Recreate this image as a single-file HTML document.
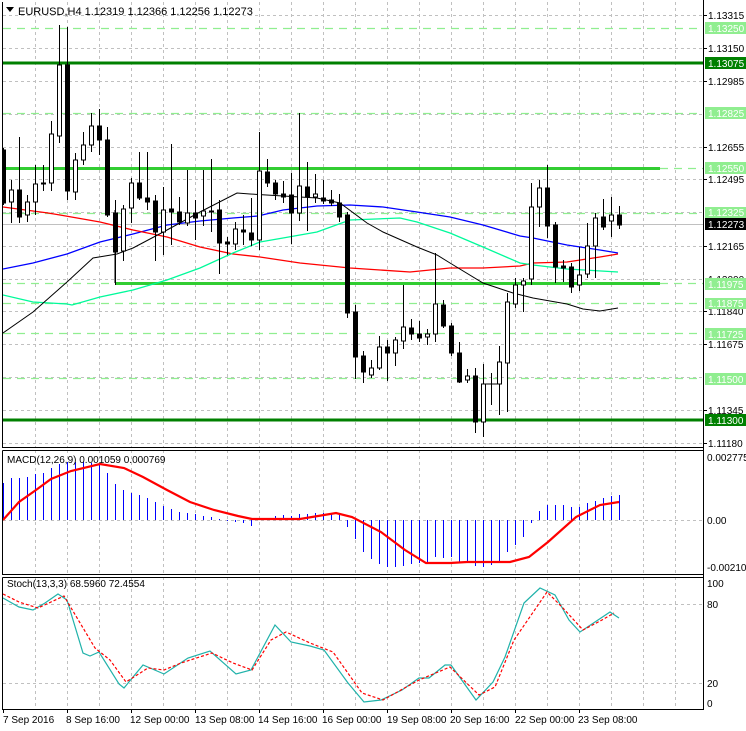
<!DOCTYPE html>
<html><head><meta charset="utf-8"><style>
html,body{margin:0;padding:0;background:#fff;}
svg{display:block;font-family:"Liberation Sans",sans-serif;}
.w{fill:#fff;stroke:#000;stroke-width:1}
.b{fill:#000;stroke:#000;stroke-width:1}
.t{font-size:10px;fill:#000}
.lb{font-size:10px;fill:#fff}
</style></head><body>
<svg width="746" height="731" viewBox="0 0 746 731" xmlns="http://www.w3.org/2000/svg">
<defs>
<clipPath id="cm"><rect x="3" y="2" width="700" height="445"/></clipPath>
</defs>
<g stroke="#c0c0c0" stroke-width="1" stroke-dasharray="3,3" fill="none">
<path d="M35.5 2V447M67.5 2V447M99.5 2V447M131.5 2V447M163.5 2V447M195.5 2V447M227.5 2V447M259.5 2V447M291.5 2V447M323.5 2V447M355.5 2V447M387.5 2V447M419.5 2V447M451.5 2V447M483.5 2V447M515.5 2V447M547.5 2V447M579.5 2V447M611.5 2V447M643.5 2V447M675.5 2V447"/>
<path d="M35.5 450V574M67.5 450V574M99.5 450V574M131.5 450V574M163.5 450V574M195.5 450V574M227.5 450V574M259.5 450V574M291.5 450V574M323.5 450V574M355.5 450V574M387.5 450V574M419.5 450V574M451.5 450V574M483.5 450V574M515.5 450V574M547.5 450V574M579.5 450V574M611.5 450V574M643.5 450V574M675.5 450V574"/>
<path d="M35.5 577V709M67.5 577V709M99.5 577V709M131.5 577V709M163.5 577V709M195.5 577V709M227.5 577V709M259.5 577V709M291.5 577V709M323.5 577V709M355.5 577V709M387.5 577V709M419.5 577V709M451.5 577V709M483.5 577V709M515.5 577V709M547.5 577V709M579.5 577V709M611.5 577V709M643.5 577V709M675.5 577V709"/>
<path d="M3 15.5H703M3 48.5H703M3 81.5H703M3 114.5H703M3 147.5H703M3 179.5H703M3 212.5H703M3 246.5H703M3 279.5H703M3 311.5H703M3 344.5H703M3 377.5H703M3 410.5H703M3 443.5H703"/>
<path d="M3 520.5H703M3 604.5H703M3 683.5H703"/>
</g>
<g clip-path="url(#cm)">
<g stroke="#90ee90" stroke-width="1.2" stroke-dasharray="8,6" fill="none">
<path d="M3 28.5H703M3 113.5H703M660 168.5H703M3 213.5H703M660 283.5H703M3 303.5H703M3 333.5H703M3 378.5H703M3 283.5H115"/>
</g>
<path d="M3 224.5H703" stroke="#c0c0c0" stroke-width="1"/>
<path d="M3 63H703M3 420H703" stroke="#008000" stroke-width="3"/>
<path d="M3 168.5H660M115 283.5H660" stroke="#32cd32" stroke-width="3"/>
<path d="M115 283V210" stroke="#000" stroke-width="1"/>
<polyline fill="none" stroke="#0000ff" stroke-width="1.3" points="3,269 33,263 67,254 100,242 133,234 167,225 200,221 233,218 258,216 283,210 317,206 350,205 383,207 417,212 450,217 483,225 520,236 533,238 567,245 600,250 618,253"/>
<polyline fill="none" stroke="#ff0000" stroke-width="1.3" points="3,207 48,213 60,215 100,222 133,230 167,237 200,247 233,254 260,257 300,263 350,268 410,272 450,268 483,268 520,266 533,263 567,262 600,257 618,254"/>
<polyline fill="none" stroke="#00fa9a" stroke-width="1.3" points="3,295 33,302 67,304 72,305 100,297 133,290 167,280 200,268 233,253 260,242 283,238 317,232 350,220 400,218 417,222 450,233 483,247 520,263 533,265 567,269 618,272"/>
<polyline fill="none" stroke="#000" stroke-width="1" points="3,333 33,312 67,282 93,258 117,254 133,248 167,230 200,212 237,193 250,194 283,196 317,198 340,203 367,223 383,232 417,247 437,255 450,263 483,283 513,293 533,298 567,304 583,309 600,311 618,308"/>
<path stroke="#000" stroke-width="1" fill="none" d="M3.5 148V205M11.5 180V223M19.5 137V223M27.5 195V222M35.5 165V215M43.5 165V191M51.5 121V191M59.5 25V143M67.5 27V200M75.5 153V200M83.5 132V165M91.5 113V152M99.5 109V155M107.5 127V217M115.5 200V285M123.5 205V261M131.5 178V223M139.5 152V200M147.5 152V210M155.5 195V261M163.5 187V255M171.5 144V245M179.5 197V225M187.5 170V226M195.5 200V240M203.5 170V226M211.5 159V232M219.5 200V274M227.5 237V255M235.5 222V250M243.5 215V245M251.5 198V246M259.5 132V250M267.5 159V187M275.5 180V200M283.5 181V203M291.5 173V244M299.5 113V221M307.5 162V231M315.5 174V203M323.5 180V204M331.5 190V206M339.5 194V222M347.5 212V318M355.5 305V379M363.5 351V383M371.5 360V378M379.5 336V370M387.5 340V381M395.5 337V366M403.5 285V349M411.5 319V340M419.5 321V342M427.5 329V345M435.5 253V342M443.5 300V328M451.5 323V356M459.5 342V383M467.5 369V383M475.5 368V433M483.5 364V437M491.5 373V405M499.5 346V415M507.5 293V412M515.5 278V308M523.5 278V312M531.5 183V285M539.5 180V227M547.5 165V238M555.5 222V283M563.5 260V282M571.5 263V293M579.5 247V291M587.5 223V278M595.5 213V278M603.5 199V230M611.5 197V237M619.5 206V229M483.5 384H499.5"/>
<rect class="b" x="1.5" y="150" width="4" height="53"/>
<rect class="w" x="9.5" y="190" width="4" height="12"/>
<rect class="b" x="17.5" y="190" width="4" height="27"/>
<rect class="w" x="25.5" y="202" width="4" height="13"/>
<rect class="w" x="33.5" y="184" width="4" height="18"/>
<rect class="b" x="41.5" y="183" width="4" height="1"/>
<rect class="w" x="49.5" y="134" width="4" height="49"/>
<rect class="w" x="57.5" y="65" width="4" height="71"/>
<rect class="b" x="65.5" y="65" width="4" height="126"/>
<rect class="w" x="73.5" y="160" width="4" height="32"/>
<rect class="w" x="81.5" y="145" width="4" height="15"/>
<rect class="w" x="89.5" y="126" width="4" height="19"/>
<rect class="b" x="97.5" y="126" width="4" height="14"/>
<rect class="b" x="105.5" y="140" width="4" height="75"/>
<rect class="b" x="113.5" y="213" width="4" height="39"/>
<rect class="w" x="121.5" y="209" width="4" height="42"/>
<rect class="w" x="129.5" y="183" width="4" height="25"/>
<rect class="b" x="137.5" y="183" width="4" height="15"/>
<rect class="b" x="145.5" y="198" width="4" height="4"/>
<rect class="b" x="153.5" y="201" width="4" height="31"/>
<rect class="w" x="161.5" y="210" width="4" height="22"/>
<rect class="b" x="169.5" y="209" width="4" height="3"/>
<rect class="b" x="177.5" y="212" width="4" height="10"/>
<rect class="w" x="185.5" y="213" width="4" height="10"/>
<rect class="b" x="193.5" y="213" width="4" height="5"/>
<rect class="w" x="201.5" y="211" width="4" height="5"/>
<rect class="b" x="209.5" y="211" width="4" height="1"/>
<rect class="b" x="217.5" y="210" width="4" height="33"/>
<rect class="b" x="225.5" y="242" width="4" height="2"/>
<rect class="w" x="233.5" y="229" width="4" height="15"/>
<rect class="b" x="241.5" y="230" width="4" height="2"/>
<rect class="b" x="249.5" y="233" width="4" height="7"/>
<rect class="w" x="257.5" y="171" width="4" height="69"/>
<rect class="b" x="265.5" y="172" width="4" height="11"/>
<rect class="b" x="273.5" y="183" width="4" height="11"/>
<rect class="b" x="281.5" y="194" width="4" height="3"/>
<rect class="b" x="289.5" y="195" width="4" height="18"/>
<rect class="w" x="297.5" y="186" width="4" height="27"/>
<rect class="b" x="305.5" y="187" width="4" height="10"/>
<rect class="w" x="313.5" y="194" width="4" height="3"/>
<rect class="b" x="321.5" y="198" width="4" height="3"/>
<rect class="b" x="329.5" y="200" width="4" height="3"/>
<rect class="b" x="337.5" y="203" width="4" height="14"/>
<rect class="b" x="345.5" y="215" width="4" height="98"/>
<rect class="b" x="353.5" y="312" width="4" height="45"/>
<rect class="b" x="361.5" y="356" width="4" height="16"/>
<rect class="w" x="369.5" y="368" width="4" height="7"/>
<rect class="w" x="377.5" y="347" width="4" height="21"/>
<rect class="b" x="385.5" y="347" width="4" height="6"/>
<rect class="w" x="393.5" y="340" width="4" height="13"/>
<rect class="w" x="401.5" y="327" width="4" height="14"/>
<rect class="b" x="409.5" y="328" width="4" height="6"/>
<rect class="b" x="417.5" y="334" width="4" height="4"/>
<rect class="w" x="425.5" y="334" width="4" height="3"/>
<rect class="w" x="433.5" y="304" width="4" height="30"/>
<rect class="b" x="441.5" y="305" width="4" height="21"/>
<rect class="b" x="449.5" y="326" width="4" height="27"/>
<rect class="b" x="457.5" y="353" width="4" height="29"/>
<rect class="w" x="465.5" y="376" width="4" height="4"/>
<rect class="b" x="473.5" y="376" width="4" height="46"/>
<rect class="w" x="481.5" y="384" width="4" height="38"/>
<rect class="w" x="497.5" y="362" width="4" height="22"/>
<rect class="w" x="505.5" y="302" width="4" height="61"/>
<rect class="w" x="513.5" y="285" width="4" height="19"/>
<rect class="w" x="521.5" y="281" width="4" height="4"/>
<rect class="w" x="529.5" y="207" width="4" height="72"/>
<rect class="w" x="537.5" y="188" width="4" height="19"/>
<rect class="b" x="545.5" y="188" width="4" height="38"/>
<rect class="b" x="553.5" y="225" width="4" height="42"/>
<rect class="b" x="561.5" y="266" width="4" height="2"/>
<rect class="b" x="569.5" y="267" width="4" height="20"/>
<rect class="w" x="577.5" y="275" width="4" height="10"/>
<rect class="w" x="585.5" y="246" width="4" height="28"/>
<rect class="w" x="593.5" y="218" width="4" height="28"/>
<rect class="b" x="601.5" y="217" width="4" height="10"/>
<rect class="w" x="609.5" y="215" width="4" height="6"/>
<rect class="b" x="617.5" y="215" width="4" height="10"/>
</g>
<path d="M6 7h8l-4 5z" fill="#000"/>
<text x="18" y="15" font-size="11" fill="#000">EURUSD,H4  1.12319 1.12366 1.12256 1.12273</text>

<path stroke="#0000ff" stroke-width="1" fill="none" d="M3.5 520V483M11.5 520V478M19.5 520V478M27.5 520V477M35.5 520V474M43.5 520V473M51.5 520V468M59.5 520V464M67.5 520V462M75.5 520V462M83.5 520V462M91.5 520V463M99.5 520V464M107.5 520V473M115.5 520V484M123.5 520V490M131.5 520V493M139.5 520V495M147.5 520V498M155.5 520V502M163.5 520V506M171.5 520V509M179.5 520V512M187.5 520V513M195.5 520V514M203.5 520V516M211.5 520V517M219.5 520V519M227.5 520V521M235.5 520V522M243.5 520V523M251.5 520V526M259.5 520V519M267.5 520V518M275.5 520V516M283.5 520V515M291.5 520V516M299.5 520V514M307.5 520V514M315.5 520V513M323.5 520V513M331.5 520V513M339.5 520V515M347.5 520V527M355.5 520V539M363.5 520V552M371.5 520V559M379.5 520V564M387.5 520V567M395.5 520V567M403.5 520V566M411.5 520V564M419.5 520V563M427.5 520V562M435.5 520V557M443.5 520V558M451.5 520V557M459.5 520V563M467.5 520V563M475.5 520V566M483.5 520V567M491.5 520V565M499.5 520V562M507.5 520V552M515.5 520V545M523.5 520V537M531.5 520V523M539.5 520V511M547.5 520V505M555.5 520V505M563.5 520V505M571.5 520V507M579.5 520V507M587.5 520V503M595.5 520V501M603.5 520V498M611.5 520V496M619.5 520V495"/>
<polyline fill="none" stroke="#ff0000" stroke-width="2.2" points="3,520 19,502 36,490 51,479 71,471 100,464 124,468 143,477 167,490 190,502 214,510 238,516 252,519 300,519 324,515 336,513 352,517 381,532 405,550 426,563 450,563 467,562 510,562 529,557 548,542 576,517 600,505 619,502"/>
<text x="7" y="463" font-size="10" fill="#000">MACD(12,26,9) 0.001059 0.000769</text>

<polyline fill="none" stroke="#20b2aa" stroke-width="1.2" points="3,598 19,607 33,610 45,603 58,594 67,600 83,653 90,656 99,652 119,684 124,688 143,665 164,674 188,658 210,651 236,674 251,670 275,625 291,642 310,646 324,650 348,683 364,702 381,700 402,690 419,678 429,678 445,665 451,665 476,700 493,682 505,657 524,603 540,588 555,595 569,620 580,632 598,620 610,612 619,618"/>
<polyline fill="none" stroke="#ff0000" stroke-width="1.2" stroke-dasharray="3,2" points="3,594 19,602 38,608 64,596 95,648 110,660 126,682 148,668 164,670 181,663 212,653 233,663 252,670 271,640 286,632 310,643 333,652 362,693 383,700 419,680 450,667 479,695 495,687 514,640 547,592 562,607 583,630 602,620 614,613"/>
<text x="7" y="587" font-size="10" fill="#000">Stoch(13,3,3) 68.5960 72.4554</text>

<g stroke="#000" stroke-width="1" fill="none">
<path d="M2.5 2V447.5H703.5M2.5 450.5V574.5H703.5M2.5 450.5H703.5M2.5 577.5V709.5H703.5M2.5 577.5H703.5M703.5 0V710"/>
<path d="M3.5 709V713M67.5 709V713M131.5 709V713M195.5 709V713M259.5 709V713M323.5 709V713M387.5 709V713M451.5 709V713M515.5 709V713M579.5 709V713"/>
<path d="M703 15.5h4M703 48.5h4M703 81.5h4M703 147.5h4M703 179.5h4M703 246.5h4M703 311.5h4M703 344.5h4M703 410.5h4M703 443.5h4"/>
</g>

<g class="t">
<text x="708" y="19" class="t">1.13315</text>
<text x="708" y="52" class="t">1.13150</text>
<text x="708" y="85" class="t">1.12985</text>
<text x="708" y="151" class="t">1.12655</text>
<text x="708" y="183" class="t">1.12495</text>
<text x="708" y="250" class="t">1.12165</text>
<text x="708" y="283" class="t">1.12000</text>
<text x="708" y="315" class="t">1.11840</text>
<text x="708" y="348" class="t">1.11675</text>
<text x="708" y="414" class="t">1.11345</text>
<text x="708" y="447" class="t">1.11180</text>
</g>
<rect x="705" y="22" width="41" height="12" fill="#90ee90"/><text x="708" y="32" class="lb">1.13250</text>
<rect x="705" y="57" width="41" height="12" fill="#008000"/><text x="708" y="67" class="lb">1.13075</text>
<rect x="705" y="107" width="41" height="12" fill="#90ee90"/><text x="708" y="117" class="lb">1.12825</text>
<rect x="705" y="162" width="41" height="12" fill="#90ee90"/><text x="708" y="172" class="lb">1.12550</text>
<rect x="705" y="207" width="41" height="11" fill="#90ee90"/><text x="708" y="216" class="lb">1.12325</text>
<rect x="705" y="218" width="41" height="12" fill="#000"/><text x="708" y="228" class="lb">1.12273</text>
<rect x="705" y="278" width="41" height="12" fill="#90ee90"/><text x="708" y="288" class="lb">1.11975</text>
<rect x="705" y="298" width="41" height="11" fill="#90ee90"/><text x="708" y="307" class="lb">1.11875</text>
<rect x="705" y="328" width="41" height="12" fill="#90ee90"/><text x="708" y="338" class="lb">1.11725</text>
<rect x="705" y="373" width="41" height="12" fill="#90ee90"/><text x="708" y="383" class="lb">1.11500</text>
<rect x="705" y="414" width="41" height="12" fill="#008000"/><text x="708" y="424" class="lb">1.11300</text>

<text x="707" y="461" class="t">0.002775</text>
<text x="707" y="524" class="t">0.00</text>
<text x="707" y="571" class="t">-0.002109</text>
<text x="707" y="587" class="t">100</text>
<text x="707" y="608" class="t">80</text>
<text x="707" y="687" class="t">20</text>
<text x="707" y="707" class="t">0</text>

<g class="t">
<text x="3" y="723">7 Sep 2016</text>
<text x="66" y="723">8 Sep 16:00</text>
<text x="130" y="723">12 Sep 00:00</text>
<text x="195" y="723">13 Sep 08:00</text>
<text x="258" y="723">14 Sep 16:00</text>
<text x="322" y="723">16 Sep 00:00</text>
<text x="387" y="723">19 Sep 08:00</text>
<text x="450" y="723">20 Sep 16:00</text>
<text x="515" y="723">22 Sep 00:00</text>
<text x="578" y="723">23 Sep 08:00</text>
</g>
</svg>
</body></html>
